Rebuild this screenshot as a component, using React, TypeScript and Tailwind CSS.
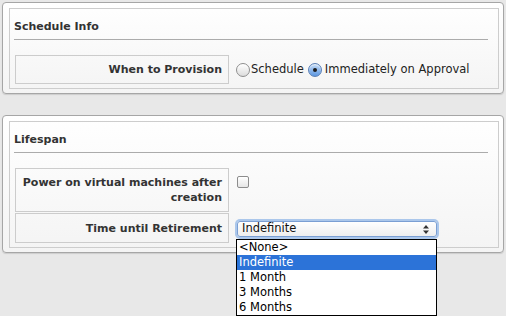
import React from "react";

function Panel({
  title,
  children,
  className = "",
}: {
  title: string;
  children: React.ReactNode;
  className?: string;
}) {
  return (
    <div
      className={
        "rounded-[4px] border border-[#a6a6a6] bg-gradient-to-b from-white to-[#f4f4f4] pl-[6px] pr-[4px] pt-[5px] pb-[4px] shadow-[0_1px_1px_rgba(0,0,0,0.12)] " +
        className
      }
    >
      <div className="border border-[#cdcdcd] pb-[4px]">
        <div className="ml-[4px] mr-[10px] h-[31px] border-b border-[#ababab] pt-[10px] text-[11px] font-bold leading-[16px] text-[#333]">
          {title}
        </div>
        <div className="flex flex-col gap-[1px] pl-[5px] pt-[15px]">{children}</div>
      </div>
    </div>
  );
}

function Row({
  label,
  height,
  children,
  alignTop = false,
}: {
  label: React.ReactNode;
  height: string;
  children: React.ReactNode;
  alignTop?: boolean;
}) {
  return (
    <div className="flex">
      <div
        className={
          "flex w-[214px] shrink-0 items-center justify-end border border-[#cccccc] pr-[6px] text-right text-[11px] font-bold leading-[15px] text-[#333] " +
          height
        }
      >
        <div>{label}</div>
      </div>
      <div className={"ml-[7px] flex " + (alignTop ? "items-start" : "items-center")}>
        {children}
      </div>
    </div>
  );
}

function Radio({ checked }: { checked?: boolean }) {
  if (checked) {
    return (
      <span className="relative inline-block h-[14px] w-[14px] rounded-full border border-[#5a7fb5] bg-gradient-to-b from-[#c9def6] via-[#8fb8ec] to-[#5c97e0] shadow-[inset_0_1px_1px_rgba(255,255,255,0.7)]">
        <span className="absolute left-[4px] top-[4px] h-[4px] w-[4px] rounded-full bg-[#1b1b1b]" />
      </span>
    );
  }
  return (
    <span className="inline-block h-[14px] w-[14px] rounded-full border border-[#8e8e8e] bg-gradient-to-b from-white to-[#dcdcdc] shadow-[inset_0_1px_1px_rgba(255,255,255,0.9)]" />
  );
}

export default function App() {
  const items = ["<None>", "Indefinite", "1 Month", "3 Months", "6 Months"];
  return (
    <div className="relative h-[316px] w-[506px] overflow-hidden bg-[#e8e8e8] px-[2px] pt-[2px] font-['DejaVu_Sans',sans-serif]">
      <Panel title="Schedule Info">
        <Row label="When to Provision" height="h-[29px]">
          <Radio />
          <span className="ml-[1px] text-[11.5px] text-[#222]">Schedule</span>
          <span className="ml-[4px] flex">
            <Radio checked />
          </span>
          <span className="ml-[3px] text-[11.5px] text-[#222]">Immediately on Approval</span>
        </Row>
      </Panel>

      <Panel title="Lifespan" className="mt-[21px]">
        <Row
          label={
            <>
              Power on virtual machines after
              <br />
              creation
            </>
          }
          height="h-[44px]"
          alignTop
        >
          <span className="ml-[1px] mt-[8px] inline-block h-[12px] w-[12px] rounded-[2px] border border-[#8d8d8d] bg-gradient-to-b from-white to-[#e6e6e6] shadow-[inset_0_1px_0_rgba(255,255,255,0.9)]" />
        </Row>
        <Row label="Time until Retirement" height="h-[30px]">
          <div className="relative ml-[1px] mt-[2px] flex h-[16px] w-[200px] items-center rounded-[3px] border border-[#7b9fd3] bg-gradient-to-b from-white to-[#eeeeee] pl-[4px] text-[11.5px] text-[#111] shadow-[0_0_0_2px_rgba(110,160,225,0.55)]">
            Indefinite
            <svg
              className="absolute right-[7px] top-[3px]"
              width="6"
              height="9"
              viewBox="0 0 6 9"
            >
              <path d="M0 3.5 L3 0 L6 3.5 Z" fill="#333" />
              <path d="M0 5.5 L3 9 L6 5.5 Z" fill="#333" />
            </svg>
          </div>
        </Row>
      </Panel>

      <div className="absolute left-[236px] top-[239px] w-[201px] border border-black bg-white text-[11.5px] leading-[15px] text-black">
        {items.map((it) => (
          <div
            key={it}
            className={
              "h-[15px] pl-[2px] " + (it === "Indefinite" ? "bg-[#2c73d8] text-white" : "")
            }
          >
            {it}
          </div>
        ))}
      </div>
    </div>
  );
}
